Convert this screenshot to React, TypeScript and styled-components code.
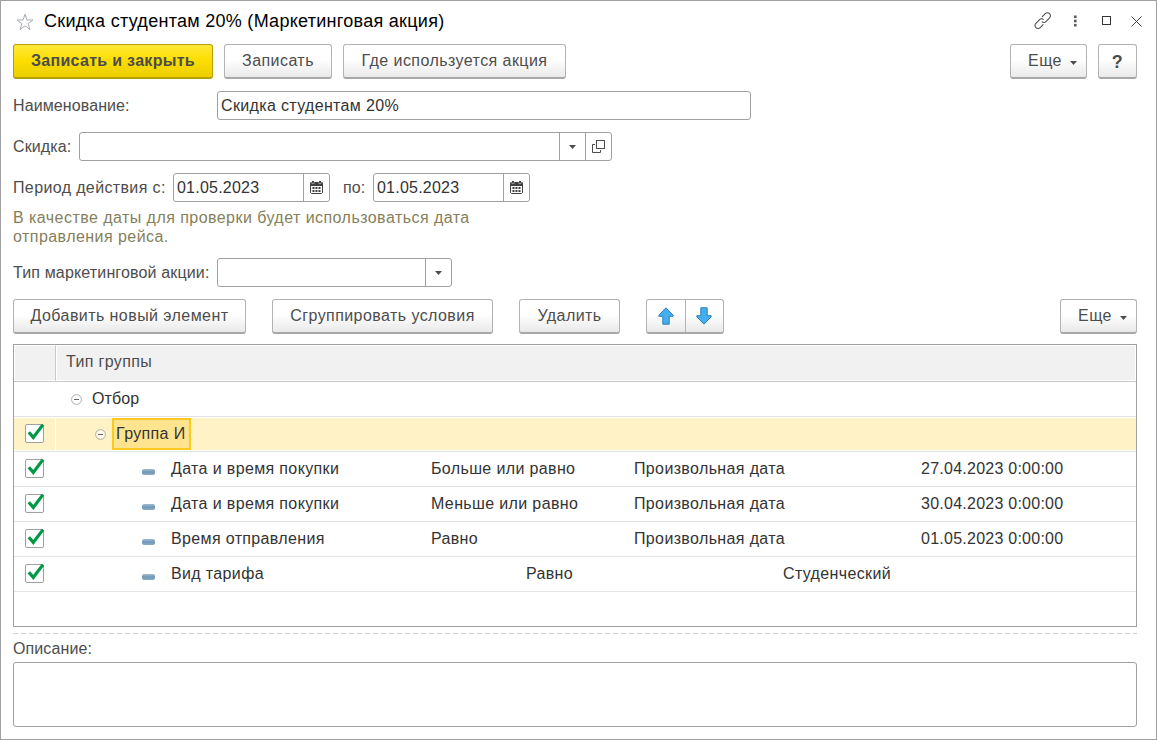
import React from "react";
import styled, { createGlobalStyle, css } from "styled-components";

const GlobalStyle = createGlobalStyle`
  * {
    box-sizing: border-box;
  }

  body {
    margin: 0;
    background: #fff;
    font-family: "Liberation Sans", Arial, sans-serif;
    font-size: 16px;
    color: #4d4d4d;
  }
`;

type Condition = {
  field: string;
  comparison: string;
  value: string;
  date?: string;
};

const conditions: Condition[] = [
  {
    field: "Дата и время покупки",
    comparison: "Больше или равно",
    value: "Произвольная дата",
    date: "27.04.2023 0:00:00"
  },
  {
    field: "Дата и время покупки",
    comparison: "Меньше или равно",
    value: "Произвольная дата",
    date: "30.04.2023 0:00:00"
  },
  {
    field: "Время отправления",
    comparison: "Равно",
    value: "Произвольная дата",
    date: "01.05.2023 0:00:00"
  },
  { field: "Вид тарифа", comparison: "Равно", value: "Студенческий" }
];

const App: React.FC = () => (
  <>
    <GlobalStyle />
    <Window>
      <TitleBar>
        <StarIcon />
        <Title>Скидка студентам 20% (Маркетинговая акция)</Title>
        <WindowControls />
      </TitleBar>

      <Toolbar $gap={11}>
        <Button $primary $width={200}>
          Записать и закрыть
        </Button>
        <Button $width={108}>Записать</Button>
        <Button $width={223}>Где используется акция</Button>
        <Spacer />
        <MoreButton />
        <Button $width={39} $bold>
          ?
        </Button>
      </Toolbar>

      <FormRow $top={12}>
        <Label $width={204}>Наименование:</Label>
        <Field $width={534}>
          <FieldValue $tracking={0.35}>Скидка студентам 20%</FieldValue>
        </Field>
      </FormRow>

      <FormRow $top={12}>
        <Label $width={66}>Скидка:</Label>
        <Field $width={533}>
          <FieldValue />
          <FieldButton>
            <DropIcon />
          </FieldButton>
          <FieldButton>
            <OpenIcon />
          </FieldButton>
        </Field>
      </FormRow>

      <FormRow $top={12}>
        <Label $width={160} $tracking={0.37}>
          Период действия с:
        </Label>
        <DateField />
        <Label $width={43} $indent={13}>
          по:
        </Label>
        <DateField />
      </FormRow>

      <Hint>
        В качестве даты для проверки будет использоваться дата
        <br />
        отправления рейса.
      </Hint>

      <FormRow $top={12}>
        <Label $width={204} $tracking={0.15}>
          Тип маркетинговой акции:
        </Label>
        <Field $width={235}>
          <FieldValue />
          <FieldButton>
            <DropIcon />
          </FieldButton>
        </Field>
      </FormRow>

      <ConditionsToolbar $gap={26}>
        <Button $width={233}>Добавить новый элемент</Button>
        <Button $width={221}>Сгруппировать условия</Button>
        <Button $width={101}>Удалить</Button>
        <ButtonGroup>
          <GroupItem>
            <ArrowIcon />
          </GroupItem>
          <GroupItem>
            <ArrowIcon down />
          </GroupItem>
        </ButtonGroup>
        <Spacer />
        <MoreButton />
      </ConditionsToolbar>

      <Table>
        <HeaderRow>
          <HeaderCell />
          <HeaderCell>Тип группы</HeaderCell>
        </HeaderRow>
        <Row>
          <CheckCell />
          <TreeCell $indent={15}>
            <CollapseIcon />
            <RootName>Отбор</RootName>
          </TreeCell>
        </Row>
        <Row $selected>
          <CheckCell>
            <Checkbox />
          </CheckCell>
          <TreeCell $indent={39}>
            <CollapseIcon />
            <ActiveCell>Группа И</ActiveCell>
          </TreeCell>
        </Row>
        {conditions.map((item, index) => (
          <Row key={index}>
            <CheckCell>
              <Checkbox />
            </CheckCell>
            <ConditionCells $wide={!item.date}>
              <Dash />
              <span>{item.field}</span>
              <span>{item.comparison}</span>
              <span>{item.value}</span>
              {item.date && <DateText>{item.date}</DateText>}
            </ConditionCells>
          </Row>
        ))}
      </Table>

      <Splitter />
      <DescriptionLabel>Описание:</DescriptionLabel>
      <Description />
    </Window>
  </>
);

export default App;

const MoreButton: React.FC = () => (
  <Button $width={77}>
    <MoreText>Еще</MoreText>
    <DropIcon />
  </Button>
);

const DateField: React.FC = () => (
  <Field $width={157}>
    <FieldValue $tracking={0.22}>01.05.2023</FieldValue>
    <FieldButton>
      <CalendarIcon />
    </FieldButton>
  </Field>
);

const Checkbox: React.FC = () => (
  <CheckBox>
    <Tick width="19" height="21" viewBox="0 0 19 21">
      <path d="M2.8 10.2 L7.3 15.4 L17 2.6" fill="none" stroke="#009846" strokeWidth="3.2" />
    </Tick>
  </CheckBox>
);

const StarIcon: React.FC = () => (
  <Star width="18" height="18" viewBox="0 0 18 18">
    <path
      d="M9 1.2 L10.9 7 H17 L12.1 10.6 L14 16.5 L9 12.9 L4 16.5 L5.9 10.6 L1 7 H7.1 Z"
      fill="none"
      stroke="#a9adb3"
    />
  </Star>
);

const WindowControls: React.FC = () => (
  <Controls>
    <svg width="20" height="20" viewBox="0 0 18 18" fill="none" stroke="#4d4d4d">
      <path d="M8.2 5.2 L11 2.4 C12.1 1.3 13.8 1.3 14.9 2.4 C16 3.5 16 5.1 14.9 6.2 L11.6 9.5 C10.5 10.6 8.9 10.6 7.9 9.6" />
      <path d="M9.3 12.1 L6.5 14.9 C5.4 16 3.7 16 2.6 14.9 C1.5 13.8 1.5 12.2 2.6 11.1 L5.9 7.8 C7 6.7 8.6 6.7 9.6 7.7" />
    </svg>
    <svg width="4" height="12" viewBox="0 0 4 12" fill="#5c5c5c">
      <rect x="1" y="0.5" width="2.6" height="2.6" />
      <rect x="1" y="4.7" width="2.6" height="2.6" />
      <rect x="1" y="8.9" width="2.6" height="2.6" />
    </svg>
    <svg width="10" height="10" viewBox="0 0 10 10">
      <rect x="0.5" y="0.5" width="8" height="8" fill="none" stroke="#333" />
    </svg>
    <svg width="11" height="11" viewBox="0 0 11 11">
      <path d="M0.5 0.5 L10.5 10.5 M10.5 0.5 L0.5 10.5" stroke="#444" />
    </svg>
  </Controls>
);

const DropIcon: React.FC = () => (
  <svg width="7" height="4" viewBox="0 0 7 4">
    <path d="M0 0 H7 L3.5 4 Z" fill="#4d4d4d" />
  </svg>
);

const OpenIcon: React.FC = () => (
  <svg width="13" height="13" viewBox="0 0 13 13" fill="none" stroke="#4d4d4d">
    <rect x="4.5" y="0.5" width="8" height="8" />
    <path d="M3 4.5 H0.5 V12.5 H8.5 V10" />
  </svg>
);

const CalendarIcon: React.FC = () => (
  <svg width="13" height="13" viewBox="0 0 13 13">
    <path d="M0.5 4 V11.5 L1.5 12.5 H11.5 L12.5 11.5 V4" fill="#fff" stroke="#404040" />
    <path d="M0 5 V2 L1 1 H2 V0 H4 V1 H9 V0 H11 V1 H12 L13 2 V5 Z" fill="#404040" />
    <path d="M1.8 1 V2.5 H4.2 V1 M8.8 1 V2.5 H11.2 V1" fill="none" stroke="#fff" strokeWidth="0.4" />
    <path d="M2.5 7 H10.5 M2.5 10 H10.5" stroke="#404040" strokeWidth="2" strokeDasharray="2 1" />
  </svg>
);

const ArrowIcon: React.FC<{ down?: boolean }> = ({ down }) => (
  <svg width="16" height="18" viewBox="0 0 16 18">
    <path
      d="M8 0.8 L15.2 8.3 V9.3 H11.2 V17.2 H4.8 V9.3 H0.8 V8.3 Z"
      fill="#44aef0"
      stroke="#2b80b5"
      strokeLinejoin="round"
      transform={down ? "rotate(180 8 9)" : undefined}
    />
  </svg>
);

const CollapseIcon: React.FC = () => (
  <svg width="11" height="11" viewBox="0 0 11 11">
    <circle cx="5.5" cy="5.5" r="4.9" fill="#fff" fillOpacity="0.5" stroke="#b0aea8" />
    <path d="M3 5.5 H8" stroke="#666" />
  </svg>
);

const Star = styled.svg`
  margin-top: 1px;
`;

const Dash = styled.i`
  width: 13px;
  height: 6px;
  margin-top: 5px;
  border-radius: 2px;
  background: linear-gradient(#a4bccd, #7198b8 50%, #8badc5);
`;

const Window = styled.div`
  display: flex;
  flex-direction: column;
  width: 1157px;
  height: 740px;
  padding: 0 19px 0 12px;
  border: 1px solid #a0a0a0;
  background: #fff;
`;

const TitleBar = styled.header`
  display: flex;
  align-items: center;
  height: 43px;
  padding: 0 0 3px 3px;
`;

const Title = styled.h1`
  flex: 1;
  margin: 0 0 0 10px;
  font-size: 18px;
  font-weight: normal;
  line-height: 22px;
  letter-spacing: 0.28px;
  color: #000;
`;

const Controls = styled.div`
  display: grid;
  grid-template-columns: 40px 29px 29px 11px;
  align-items: center;
  margin-right: -5px;
`;

const Toolbar = styled.div<{ $gap: number }>`
  display: flex;
  gap: ${props => props.$gap}px;
`;

const ConditionsToolbar = styled(Toolbar)`
  margin-top: 12px;
`;

const Spacer = styled.div`
  flex: 1;
`;

const raised = css`
  height: 35px;
  border: 1px solid #b3b3b3;
  border-bottom: 2px solid #a8a8a8;
  border-radius: 3px;
  background: linear-gradient(#fff 45%, #e9e9e9);
`;

const Button = styled.button<{ $width: number; $primary?: boolean; $bold?: boolean }>`
  ${raised}
  display: flex;
  align-items: center;
  justify-content: center;
  width: ${props => props.$width}px;
  padding: 0 0 1px;
  font-family: inherit;
  font-size: 16px;
  letter-spacing: 0.43px;
  white-space: nowrap;
  color: #4d4d4d;

  ${props =>
    props.$bold &&
    css`
      padding: 3px 0 0;
      font-size: 18px;
      font-weight: bold;
    `}

  ${props =>
    props.$primary &&
    css`
      border-color: #b7a000;
      background: linear-gradient(#ffe939, #fbdd00 50%, #ecce00);
      font-weight: bold;
      letter-spacing: 0.3px;
    `}
`;

const MoreText = styled.span`
  margin: 0 8px 0 8px;

  & + svg {
    margin-top: 5px;
  }
`;

const ButtonGroup = styled.div`
  ${raised}
  display: flex;
  width: 78px;
`;

const GroupItem = styled.div`
  display: flex;
  flex: 1;
  align-items: center;
  justify-content: center;

  & + & {
    border-left: 1px solid #b3b3b3;
  }
`;

const FormRow = styled.div<{ $top: number }>`
  display: flex;
  align-items: center;
  height: 29px;
  margin-top: ${props => props.$top}px;
`;

const Label = styled.label<{ $width: number; $indent?: number; $tracking?: number }>`
  width: ${props => props.$width}px;
  padding-left: ${props => props.$indent || 0}px;
  letter-spacing: ${props => props.$tracking || 0.1}px;
  white-space: nowrap;
`;

const Field = styled.div<{ $width: number }>`
  display: flex;
  width: ${props => props.$width}px;
  height: 29px;
  border: 1px solid #a0a0a0;
  border-radius: 3px;
`;

const FieldValue = styled.div<{ $tracking?: number }>`
  flex: 1;
  padding-left: 3px;
  line-height: 27px;
  letter-spacing: ${props => props.$tracking || 0}px;
  color: #333;
`;

const FieldButton = styled.div`
  display: flex;
  align-items: center;
  justify-content: center;
  width: 26px;
  border-left: 1px solid #a0a0a0;
`;

const Hint = styled.p`
  margin: 6px 0 0;
  line-height: 19px;
  letter-spacing: 0.45px;
  color: #857f5c;
`;

const Table = styled.div`
  height: 283px;
  margin-top: 10px;
  border: 1px solid #a0a0a0;
  letter-spacing: 0.36px;
`;

const HeaderRow = styled.div`
  display: grid;
  grid-template-columns: 42px 1fr;
  height: 37px;
  border-bottom: 1px solid #c8c8c8;
`;

const HeaderCell = styled.div`
  padding-left: 9px;
  border: 1px solid #fff;
  background: #f1f1f1;
  line-height: 32px;

  &:first-child {
    border-right-color: #c8c8c8;
  }
`;

const Row = styled.div<{ $selected?: boolean }>`
  display: grid;
  grid-template-columns: 42px 1fr;
  height: 35px;
  padding: 1px 0;
  border-bottom: 1px solid #e3e3e3;
  background: ${props => (props.$selected ? "#fff2c6" : "#fff")};
  background-clip: content-box;
  color: #333;
`;

const CheckCell = styled.div`
  padding: 6px 0 0 11px;
  border-right: 1px solid #fff;
`;

const CheckBox = styled.div`
  position: relative;
  width: 19px;
  height: 19px;
  border: 1px solid #a0a0a0;
  border-radius: 2px;
  background: #fff;
`;

const Tick = styled.svg`
  position: absolute;
  left: 0;
  top: -3px;
`;

const TreeCell = styled.div<{ $indent: number }>`
  display: flex;
  align-items: center;
  height: 32px;
  padding-left: ${props => props.$indent}px;
`;

const RootName = styled.span`
  margin-left: 10px;
  letter-spacing: 0.1px;
`;

const ActiveCell = styled.span`
  width: 79px;
  height: 32px;
  margin-left: 6px;
  padding: 0 2px;
  border: 2px solid #fbc91f;
  background: #ffe48f;
  line-height: 27px;
  white-space: nowrap;
`;

const ConditionCells = styled.div<{ $wide: boolean }>`
  display: grid;
  grid-template-columns: ${props =>
    props.$wide ? "29px 355px 257px 1fr" : "29px 260px 203px 287px 1fr"};
  align-items: center;
  height: 32px;
  padding-left: 86px;
`;

const DateText = styled.span`
  letter-spacing: 0.25px;
`;

const Splitter = styled.div`
  height: 1px;
  margin-top: 6px;
  background: repeating-linear-gradient(90deg, #d2d2d2 0 5px, transparent 5px 8px);
`;

const DescriptionLabel = styled.label`
  margin-top: 4px;
  line-height: 21px;
  letter-spacing: 0.1px;
`;

const Description = styled.div`
  height: 65px;
  margin-top: 3px;
  border: 1px solid #a0a0a0;
  border-radius: 3px;
`;
